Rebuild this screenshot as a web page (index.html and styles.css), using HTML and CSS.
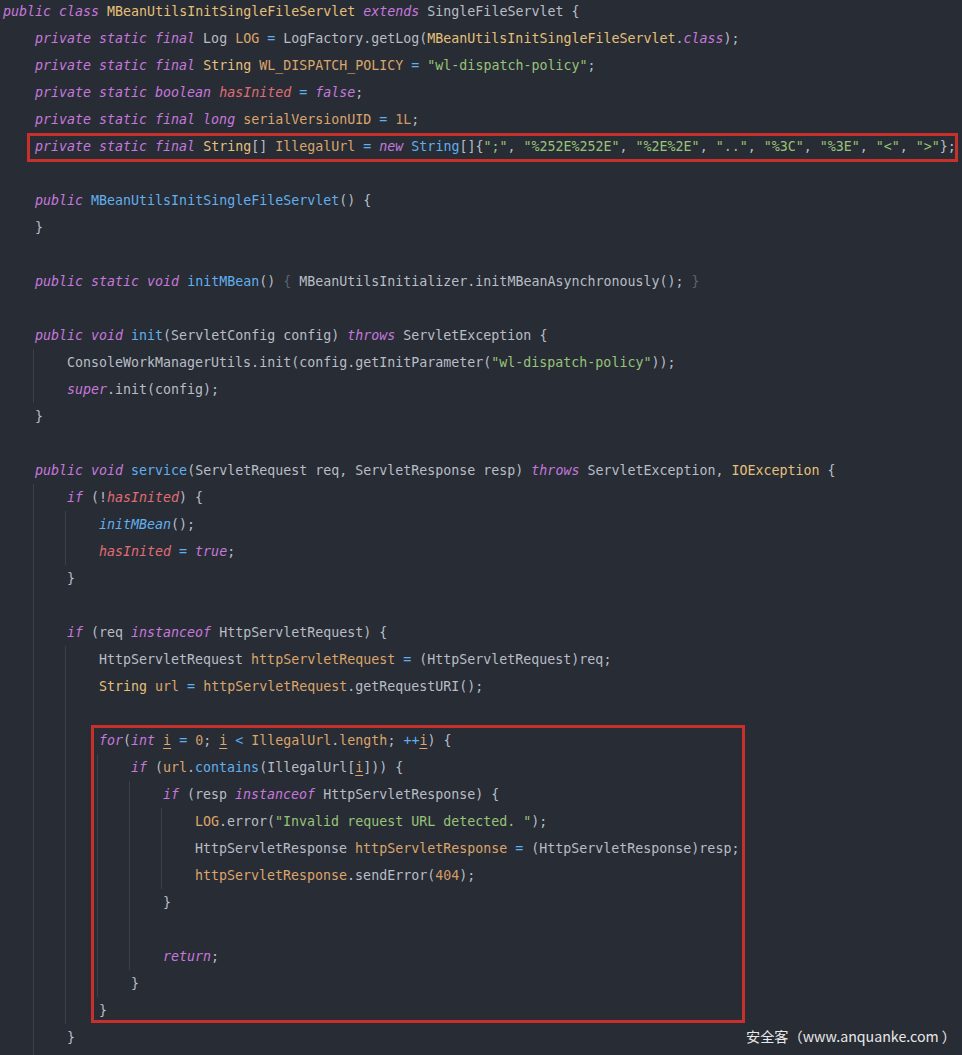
FILE: index.html
```html
<!DOCTYPE html>
<html lang="en">
<head>
  <meta charset="UTF-8">
  <meta name="viewport" content="width=device-width, initial-scale=1.0">
  <title>MBeanUtilsInitSingleFileServlet.java</title>
  <link rel="stylesheet" href="styles.css">
</head>
<body>
  <div class="editor">
    <div class="code">
      <div class="line"><span class="k">public class</span> <span class="t">MBeanUtilsInitSingleFileServlet</span> <span class="k">extends</span> SingleFileServlet {</div>
      <div class="cls">
        <div class="line"><span class="k">private static final</span> Log <span class="f">LOG</span> <span class="o">=</span> LogFactory.getLog(<span class="t">MBeanUtilsInitSingleFileServlet</span>.<span class="k">class</span>);</div>
        <div class="line"><span class="k">private static final</span> <span class="t">String</span> <span class="f">WL_DISPATCH_POLICY</span> <span class="o">=</span> <span class="s">"wl-dispatch-policy"</span>;</div>
        <div class="line"><span class="k">private static boolean</span> <span class="r">hasInited</span> <span class="o">=</span> <span class="k">false</span>;</div>
        <div class="line"><span class="k">private static final long</span> <span class="f">serialVersionUID</span> <span class="o">=</span> <span class="n">1L</span>;</div>
        <div class="line"><span class="k">private static final</span> <span class="t">String</span>[] <span class="f">IllegalUrl</span> <span class="o">=</span> <span class="k">new</span> <span class="m">String</span>[]{<span class="s">";"</span>, <span class="s">"%252E%252E"</span>, <span class="s">"%2E%2E"</span>, <span class="s">".."</span>, <span class="s">"%3C"</span>, <span class="s">"%3E"</span>, <span class="s">"&lt;"</span>, <span class="s">"&gt;"</span>};</div>
        <div class="line"> </div>
        <div class="line"><span class="k">public</span> <span class="m">MBeanUtilsInitSingleFileServlet</span>() {</div>
        <div class="line">}</div>
        <div class="line"> </div>
        <div class="line"><span class="k">public static void</span> <span class="m">initMBean</span>() <span class="d">{</span> MBeanUtilsInitializer.initMBeanAsynchronously(); <span class="d">}</span></div>
        <div class="line"> </div>
        <div class="line"><span class="k">public void</span> <span class="m">init</span>(ServletConfig config) <span class="k">throws</span> ServletException {</div>
        <div class="blk">
          <div class="line">ConsoleWorkManagerUtils.init(config.getInitParameter(<span class="s">"wl-dispatch-policy"</span>));</div>
          <div class="line"><span class="k">super</span>.init(config);</div>
        </div>
        <div class="line">}</div>
        <div class="line"> </div>
        <div class="line"><span class="k">public void</span> <span class="m">service</span>(ServletRequest req, ServletResponse resp) <span class="k">throws</span> ServletException, <span class="t">IOException</span> {</div>
        <div class="blk">
          <div class="line"><span class="k">if</span> (!<span class="r">hasInited</span>) {</div>
          <div class="blk">
            <div class="line"><span class="m i">initMBean</span>();</div>
            <div class="line"><span class="r">hasInited</span> <span class="o">=</span> <span class="k">true</span>;</div>
          </div>
          <div class="line">}</div>
          <div class="line"> </div>
          <div class="line"><span class="k">if</span> (req <span class="k">instanceof</span> HttpServletRequest) {</div>
          <div class="blk">
            <div class="line">HttpServletRequest <span class="f">httpServletRequest</span> <span class="o">=</span> (HttpServletRequest)req;</div>
            <div class="line"><span class="t">String</span> <span class="f">url</span> <span class="o">=</span> <span class="f">httpServletRequest</span>.getRequestURI();</div>
            <div class="line"> </div>
            <div class="line"><span class="k">for</span>(<span class="k">int</span> <span class="u">i</span> <span class="o">=</span> <span class="n">0</span>; <span class="u">i</span> <span class="o">&lt;</span> <span class="f">IllegalUrl</span>.<span class="f">length</span>; <span class="o">++</span><span class="u">i</span>) {</div>
            <div class="blk">
              <div class="line"><span class="k">if</span> (<span class="f">url</span>.<span class="m">contains</span>(IllegalUrl[<span class="u">i</span>])) {</div>
              <div class="blk">
                <div class="line"><span class="k">if</span> (resp <span class="k">instanceof</span> HttpServletResponse) {</div>
                <div class="blk">
                  <div class="line"><span class="f">LOG</span>.error(<span class="s">"Invalid request URL detected. "</span>);</div>
                  <div class="line">HttpServletResponse <span class="f">httpServletResponse</span> <span class="o">=</span> (HttpServletResponse)resp;</div>
                  <div class="line"><span class="f">httpServletResponse</span>.sendError(<span class="n">404</span>);</div>
                </div>
                <div class="line">}</div>
                <div class="line"> </div>
                <div class="line"><span class="k">return</span>;</div>
              </div>
              <div class="line">}</div>
            </div>
            <div class="line">}</div>
          </div>
          <div class="line">}</div>
          <div class="line"> </div>
        </div>
      </div>
    </div>

    <div class="mark mark-field"></div>
    <div class="mark mark-loop"></div>

    <div class="watermark">安全客（www.anquanke.com ）</div>
  </div>
</body>
</html>
```

FILE: styles.css
```css
body {
  margin: 0;
  padding: 0;
  background-color: #282c34;
  overflow: hidden;
}

.editor {
  position: relative;
  width: 962px;
  height: 1055px;
  overflow: hidden;
  background-color: #282c34;
}

.code {
  margin-top: -2px;
  padding-left: 3px;
  font-family: "DejaVu Sans Mono", "Liberation Mono", monospace;
  font-size: 13.3px;
  color: #b8bdc7;
}

.line {
  height: 27px;
  line-height: 27px;
  white-space: pre;
}

.cls {
  padding-left: 32px;
}

.blk {
  margin-left: -2px;
  padding-left: 34px;
  background: linear-gradient(#3b4049, #3b4049) no-repeat left top / 1px 100%;
}

.k {
  color: #c678dd;
  font-style: italic;
}

.t {
  color: #e5c07b;
}

.f {
  color: #dba56c;
}

.m {
  color: #61afef;
}

.i {
  font-style: italic;
}

.s {
  color: #98c379;
}

.n {
  color: #d19a66;
}

.o {
  color: #61afef;
}

.r {
  color: #e06c75;
  font-style: italic;
}

.u {
  color: #dba56c;
  text-decoration: underline;
  text-underline-offset: 3px;
}

.d {
  color: #5c6370;
}

.mark {
  position: absolute;
  border: 3px solid #c8302b;
  box-sizing: border-box;
}

.mark-field {
  left: 27px;
  top: 133px;
  width: 931px;
  height: 29px;
}

.mark-loop {
  left: 91px;
  top: 725px;
  width: 654px;
  height: 298px;
}

.watermark {
  position: absolute;
  right: 6px;
  bottom: 9px;
  font-family: "Noto Sans CJK SC", "Noto Sans", sans-serif;
  font-size: 14.2px;
  color: #e8e8e8;
}
```
